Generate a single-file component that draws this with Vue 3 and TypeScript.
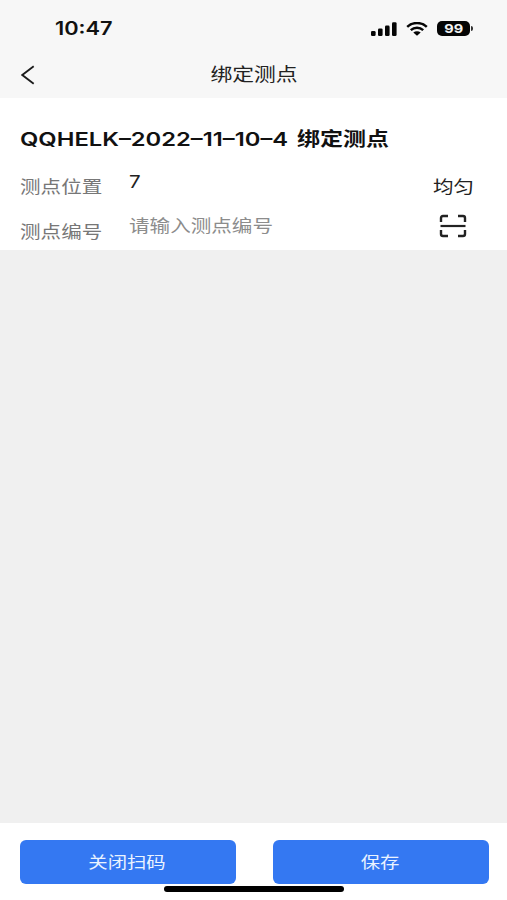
<script setup lang="ts">
import { ref } from 'vue'

const time = '10:47'
const battery = 99
const pageTitle = '绑定测点'
const position = '7'
const pointCode = ref('')
const actions: string[] = ['关闭扫码', '保存']
</script>

<template>
  <div class="screen">
    <header class="top">
      <div class="status">
        <span class="time wide">{{ time }}</span>
        <div class="signals">
          <svg class="cell" viewBox="0 0 26 14" width="26" height="14">
            <rect x="0" y="9" width="4.6" height="5" rx="1.3" />
            <rect x="7" y="6.5" width="4.6" height="7.5" rx="1.3" />
            <rect x="14" y="3.6" width="4.6" height="10.4" rx="1.3" />
            <rect x="21" y="0.3" width="4.6" height="13.7" rx="1.3" />
          </svg>
          <svg class="wifi" viewBox="0 0 22 14" width="22" height="14">
            <path d="M1.2 4.8C6.7-.2 15.3-.2 20.8 4.8M4.8 8.1C8.3 5 13.7 5 17.2 8.1" fill="none" stroke="#050505" stroke-width="2.5" />
            <path d="M7.3 10.5C9.4 8.8 12.6 8.8 14.7 10.5L11 13.8Z" />
          </svg>
          <div class="battery"><span class="wide-center">{{ battery }}</span></div>
          <i class="battery-tip"></i>
        </div>
      </div>
      <nav class="nav">
        <svg class="back" viewBox="0 0 14 20" width="14" height="20">
          <path d="M12.7 1.2L1.3 10L12.7 18.8" fill="none" stroke="#1c1c1c" stroke-width="1.8" />
        </svg>
        <h1 class="title"><span class="wide-center">{{ pageTitle }}</span></h1>
      </nav>
    </header>

    <main class="card">
      <h2 class="heading">
        <span class="code wide">QQHELK–2022–11–10–4</span>
        <span class="action wide">绑定测点</span>
      </h2>
      <div class="row first">
        <span class="label wide">测点位置</span>
        <span class="value wide">{{ position }}</span>
        <span class="even wide">均匀</span>
      </div>
      <div class="row second">
        <span class="label wide">测点编号</span>
        <input v-model="pointCode" class="input wide" placeholder="请输入测点编号" />
        <svg class="scan" viewBox="0 0 28 24" width="28" height="24">
          <path d="M9 2H4Q2 2 2 4V8M19 2H24Q26 2 26 4V8M2 16V20Q2 22 4 22H9M26 16V20Q26 22 24 22H19" fill="none" stroke="#222" stroke-width="2.4" />
          <path d="M1.5 12H26.5" stroke="#222" stroke-width="2.2" />
        </svg>
      </div>
    </main>

    <footer class="footer">
      <button v-for="action in actions" :key="action" class="button">
        <span class="wide-center">{{ action }}</span>
      </button>
      <i class="home"></i>
    </footer>
  </div>
</template>

<style>
body {
  margin: 0;
}
</style>

<style scoped>
.screen {
  width: 507px;
  height: 900px;
  display: flex;
  flex-direction: column;
  background: #f0f0f0;
  color: #222;
  font-family: Inter, "Noto Sans CJK SC", sans-serif;
  overflow: hidden;
}
.wide,
.wide-center {
  display: inline-block;
  white-space: nowrap;
  transform: scaleX(1.21);
  transform-origin: left center;
}
.wide-center {
  transform-origin: center;
}
.top {
  height: 98px;
  flex: none;
  background: #f7f7f7;
}
.status {
  height: 50px;
  padding: 7px 34px 0 55px;
  box-sizing: border-box;
  display: flex;
  align-items: center;
  justify-content: space-between;
}
.time {
  font-size: 18px;
  font-weight: 600;
  line-height: 22px;
  color: #111;
}
.signals {
  display: flex;
  align-items: center;
  fill: #050505;
}
.wifi {
  margin-left: 9px;
}
.battery {
  width: 33px;
  height: 15px;
  margin-left: 9px;
  border-radius: 5px;
  background: #050505;
  color: #f3f3f3;
  font-size: 12px;
  font-weight: 700;
  line-height: 15px;
  text-align: center;
}
.battery-tip {
  width: 2px;
  height: 5px;
  margin-left: 1px;
  border-radius: 0 2px 2px 0;
  background: #333;
}
.nav {
  height: 50px;
  display: grid;
  grid-template-columns: 60px 1fr 60px;
  align-items: center;
}
.back {
  margin-left: 21px;
}
.title {
  margin: 0;
  font-size: 18px;
  font-weight: 400;
  line-height: 26px;
  text-align: center;
}
.card {
  height: 152px;
  flex: none;
  box-sizing: border-box;
  padding: 27px 20px 0 20px;
  background: #fff;
}
.heading {
  margin: 0;
  height: 30px;
  display: grid;
  grid-template-columns: 277px 1fr;
  align-items: center;
  font-size: 19px;
  font-weight: 600;
  line-height: 30px;
  color: #111;
}
.code {
  transform: scaleX(1.25);
}
.row {
  display: grid;
  grid-template-columns: 109px 304px 1fr;
  align-items: start;
  font-size: 17px;
  line-height: 26px;
}
.first {
  height: 45px;
  padding-top: 19px;
  box-sizing: border-box;
}
.label {
  color: #777;
}
.value {
  margin-top: -5px;
}
.second {
  padding-top: 8px;
}
.second .label {
  margin-top: 11px;
}
.input {
  width: 220px;
  height: 26px;
  margin-top: 5px;
  padding: 0;
  border: 0;
  outline: 0;
  background: transparent;
  color: #222;
  font: inherit;
}
.input::placeholder {
  color: #8c8c8c;
  opacity: 1;
}
.scan {
  margin: 6px 0 0 6px;
}
.footer {
  position: relative;
  height: 77px;
  margin-top: auto;
  flex: none;
  box-sizing: border-box;
  padding: 17px 18px 0 20px;
  display: grid;
  grid-template-columns: 1fr 1fr;
  column-gap: 37px;
  align-items: start;
  background: #fff;
}
.button {
  height: 44px;
  padding: 0 2px 0 0;
  border: 0;
  border-radius: 6px;
  background: #3478f2;
  color: #eaf3ff;
  font: 400 16px/44px Inter, "Noto Sans CJK SC", sans-serif;
}
.home {
  position: absolute;
  left: 164px;
  top: 63px;
  width: 180px;
  height: 6px;
  border-radius: 3px;
  background: #000;
}
</style>
